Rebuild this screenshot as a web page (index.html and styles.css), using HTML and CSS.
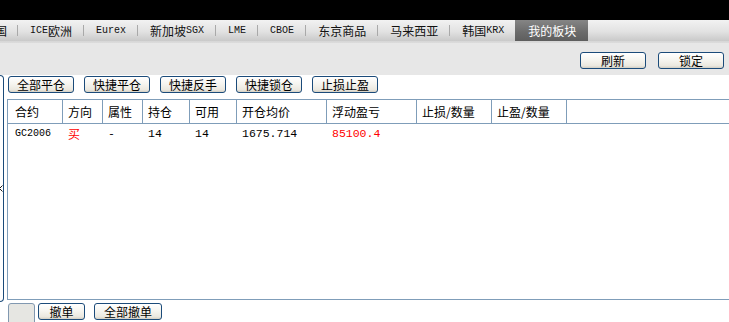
FILE: index.html
```html
<!DOCTYPE html>
<html lang="zh-CN">
<head>
<meta charset="utf-8">
<title>我的板块</title>
<link rel="stylesheet" href="styles.css">
</head>
<body>
<div class="app">
  <div class="topbar"></div>
  <div class="tabs">
    <span class="tab first">国</span><span class="sep"></span>
    <span class="tab"><span class="en">ICE</span>欧洲</span><span class="sep"></span>
    <span class="tab"><span class="en">Eurex</span></span><span class="sep"></span>
    <span class="tab">新加坡<span class="en">SGX</span></span><span class="sep"></span>
    <span class="tab"><span class="en">LME</span></span><span class="sep"></span>
    <span class="tab"><span class="en">CBOE</span></span><span class="sep"></span>
    <span class="tab">东京商品</span><span class="sep"></span>
    <span class="tab">马来西亚</span><span class="sep"></span>
    <span class="tab">韩国<span class="en">KRX</span></span>
    <span class="tab active">我的板块</span>
  </div>
  <div class="toolbar">
    <button class="btn">刷新</button>
    <button class="btn">锁定</button>
  </div>
  <div class="main">
    <div class="side">
      <svg class="chev" width="4" height="7" viewBox="0 0 4 7"><polyline points="3.5,0.5 0.5,3.5 3.5,6.5" fill="none" stroke="#1a1a1a" stroke-width="1"/></svg>
    </div>
    <div class="content">
      <div class="actions">
        <button class="btn">全部平仓</button>
        <button class="btn">快捷平仓</button>
        <button class="btn">快捷反手</button>
        <button class="btn">快捷锁仓</button>
        <button class="btn">止损止盈</button>
      </div>
      <div class="grid">
        <div class="th c1">合约</div>
        <div class="th">方向</div>
        <div class="th">属性</div>
        <div class="th">持仓</div>
        <div class="th">可用</div>
        <div class="th">开仓均价</div>
        <div class="th">浮动盈亏</div>
        <div class="th">止损/数量</div>
        <div class="th">止盈/数量</div>
        <div class="th last"></div>

        <div class="td c1 code">GC2006</div>
        <div class="td red">买</div>
        <div class="td num">-</div>
        <div class="td num">14</div>
        <div class="td num">14</div>
        <div class="td num">1675.714</div>
        <div class="td num red">85100.4</div>
        <div class="td"></div>
        <div class="td"></div>
        <div class="td"></div>
      </div>
      <div class="bottom">
        <span class="square"></span>
        <button class="btn small">撤单</button>
        <button class="btn wide">全部撤单</button>
      </div>
    </div>
  </div>
</div>
</body>
</html>
```
FILE: styles.css
```css
* { box-sizing: border-box; }
html, body {
  margin: 0;
  padding: 0;
  width: 729px;
  height: 322px;
  overflow: hidden;
  background: #fff;
}
body {
  font-family: "Noto Sans CJK SC", "Liberation Sans", sans-serif;
  font-size: 12px;
  color: #000;
}
.app { width: 729px; height: 322px; overflow: hidden; }

.topbar { height: 20px; background: #000; }

.tabs {
  height: 23px;
  display: flex;
  align-items: center;
  white-space: nowrap;
  overflow: hidden;
  background: linear-gradient(#f2f2f2, #e2e2e2 50%, #c9c9c9 21px, #d6d6d6 21px, #dcdcdc);
}
.tab {
  display: flex;
  align-items: center;
  height: 21px;
  align-self: flex-start;
  padding: 0 11px 0 12px;
  line-height: 21px;
  color: #111;
}
.tab.first { margin-left: -5px; padding-left: 0; padding-right: 10px; }
.tab.active {
  padding: 0 12px 0 13px;
  color: #fff;
  background: linear-gradient(#858585, #6a6a6a 60%, #5e5e5e);
}
.en { font-family: "Liberation Mono", "DejaVu Sans Mono", monospace; font-size: 10px; }
.sep {
  width: 1px;
  height: 11px;
  margin-top: -2px;
  background: #a9a9a9;
}

.toolbar {
  height: 32px;
  background: #e7e7e7;
  display: flex;
  justify-content: flex-end;
  gap: 12px;
  padding: 9px 5px 0 0;
}

.btn {
  width: 66px;
  height: 17px;
  padding: 0;
  margin: 0;
  border: 1px solid #1b4b7a;
  border-radius: 3px;
  background: linear-gradient(#ffffff, #f6f5f0 45%, #ebe8df 85%, #d3cfc4);
  font-family: "Noto Sans CJK SC", sans-serif;
  font-size: 12px;
  line-height: 15px;
  color: #000;
  text-align: center;
  flex-shrink: 0;
}

.main {
  display: flex;
  height: 247px;
  background: #fff;
}
.side {
  width: 4px;
  height: 227px;
  border: 1px solid #1b4b7a;
  border-left: none;
  border-radius: 0 4px 4px 0;
  display: flex;
  align-items: center;
  flex-shrink: 0;
}
.chev { display: block; margin-left: -1px; }

.content {
  margin-left: 3px;
  flex: 1;
  display: flex;
  flex-direction: column;
}
.content > * { flex-shrink: 0; }
.actions {
  display: flex;
  gap: 10px;
  padding: 1px 0 0 1px;
}

.grid {
  margin-top: 6px;
  width: 730px;
  height: 201px;
  border: 1px solid #7f9db9;
  display: grid;
  grid-template-columns: 55px 40px 40px 47px 47px 90px 90px 75px 75px 1fr;
  grid-template-rows: 24px 20px;
  align-content: start;
}
.th {
  border-right: 1px solid #7f9db9;
  border-bottom: 1px solid #7f9db9;
  padding-left: 5px;
  line-height: 23px;
  white-space: nowrap;
}
.th.last { border-right: none; }
.c1 { padding-left: 7px; }
.td {
  padding-left: 5px;
  line-height: 20px;
  white-space: nowrap;
}
.td.c1 { padding-left: 7px; }
.code { font-family: "Liberation Mono", monospace; font-size: 10px; }
.num { font-family: "Liberation Mono", monospace; font-size: 11.5px; }
.red { color: #ff0000; }

.bottom {
  margin-top: 3px;
  display: flex;
  align-items: flex-start;
  padding-left: 1px;
}
.square {
  width: 27px;
  height: 22px;
  border: 1px solid #8198b0;
  border-radius: 3px;
  background: #e6e6e2;
  flex-shrink: 0;
}
.btn.small { width: 47px; margin-left: 3px; }
.btn.wide { width: 68px; margin-left: 9px; }
```
